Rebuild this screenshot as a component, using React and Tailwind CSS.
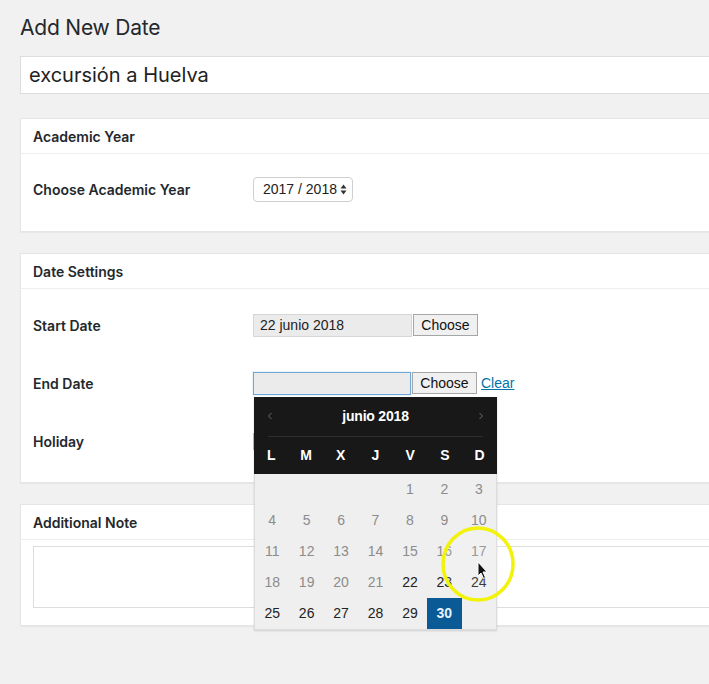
import React from 'react';

const DAY_NAMES = ['L', 'M', 'X', 'J', 'V', 'S', 'D'];

const buildWeeks = () => {
  const cells = [null, null, null, null];
  for (let d = 1; d <= 30; d++) cells.push(d);
  while (cells.length % 7) cells.push(null);
  const weeks = [];
  for (let i = 0; i < cells.length; i += 7) weeks.push(cells.slice(i, i + 7));
  return weeks;
};

const Panel = ({ title, children, className = '' }) => (
  <div className={`bg-white border border-[#e5e5e5] shadow-[0_1px_1px_rgba(0,0,0,0.04)] ${className}`}>
    <div className="h-[35px] leading-[35px] pl-[12px] border-b border-[#eeeeee] text-[14px] font-semibold text-[#23282d]">
      {title}
    </div>
    {children}
  </div>
);

const Row = ({ label, children }) => (
  <div className="flex items-center h-[58px] pl-[12px]">
    <div className="w-[220px] text-[14px] font-semibold text-[#23282d]">{label}</div>
    <div className="flex items-center">{children}</div>
  </div>
);

const ChooseButton = () => (
  <div className="ml-[1px] w-[65px] h-[22px] flex items-center justify-center bg-[#f0f0f0] border border-[#a6a6a6] text-[14px] text-[#111] font-['Liberation_Sans',sans-serif]">
    Choose
  </div>
);

const Calendar = () => {
  const weeks = buildWeeks();
  return (
    <div className="absolute left-[1px] top-[25px] w-[243px] z-10 font-['Liberation_Sans',sans-serif] shadow-[0_1px_2px_rgba(0,0,0,0.15)]">
      <div className="bg-[#181818]">
        <div className="flex items-center justify-between h-[39px] px-[13px]">
          <svg width="6" height="8" viewBox="0 0 6 8"><path d="M4.5 1 L1.5 4 L4.5 7" stroke="#6e6e6e" strokeWidth="1" fill="none" /></svg>
          <span className="text-white font-bold text-[14px] tracking-[-0.2px]">junio 2018</span>
          <svg width="6" height="8" viewBox="0 0 6 8"><path d="M1.5 1 L4.5 4 L1.5 7" stroke="#6e6e6e" strokeWidth="1" fill="none" /></svg>
        </div>
        <div className="mx-[14px] border-t border-[#2e2e2e]" />
        <div className="grid grid-cols-7 h-[37px] items-center">
          {DAY_NAMES.map(d => (
            <div key={d} className="text-center text-white font-bold text-[14px]">{d}</div>
          ))}
        </div>
      </div>
      <div className="bg-[#efefef] border border-t-0 border-[#dcdcdc]">
        {weeks.map((week, i) => (
          <div key={i} className="grid grid-cols-7 h-[31px]">
            {week.map((d, j) => {
              if (!d) return <div key={j} />;
              if (d === 30) {
                return (
                  <div key={j} className="flex items-center justify-center bg-[#0a5a96] text-[#e6f3ff] font-bold text-[14px]">
                    {d}
                  </div>
                );
              }
              return (
                <div
                  key={j}
                  className={`flex items-center justify-center text-[14px] ${d < 22 ? 'text-[#8c8c8c]' : 'text-[#222]'}`}
                >
                  {d}
                </div>
              );
            })}
          </div>
        ))}
      </div>
    </div>
  );
};

const App = () => {
  return (
    <div className="relative w-[709px] h-[684px] overflow-hidden bg-[#f1f1f1] font-['Inter',sans-serif] text-[#23282d]">
      <div className="w-[780px] pl-[20px] pt-[14px]">
        <h1 className="text-[21px] leading-[28px] font-normal text-[#23282d] tracking-[-0.2px]">Add New Date</h1>

        <div className="mt-[14px] h-[38px] bg-white border border-[#dddddd] flex items-center pl-[8px] text-[20px] text-[#222]">
          excursión a Huelva
        </div>

        <Panel title="Academic Year" className="mt-[24px]">
          <div className="pt-[6px] pb-[13px]">
            <Row label="Choose Academic Year">
              <div className="w-[100px] h-[25px] rounded-[4px] border border-[#cfcfcf] bg-white flex items-center justify-between pl-[9px] pr-[5px] text-[14px] text-[#222] font-['Liberation_Sans',sans-serif]">
                <span>2017 / 2018</span>
                <svg width="7" height="11" viewBox="0 0 7 11">
                  <path d="M3.5 0.5 L6.5 4.5 L0.5 4.5 Z" fill="#333" />
                  <path d="M3.5 10.5 L6.5 6.5 L0.5 6.5 Z" fill="#333" />
                </svg>
              </div>
            </Row>
          </div>
        </Panel>

        <Panel title="Date Settings" className="mt-[21px]">
          <div className="pt-[7px] pb-[12px]">
            <Row label="Start Date">
              <div className="w-[159px] h-[23px] bg-[#ebebeb] border border-[#d6d6d6] flex items-center pl-[6px] text-[14px] text-[#222] font-['Liberation_Sans',sans-serif]">
                22 junio 2018
              </div>
              <ChooseButton />
            </Row>
            <Row label="End Date">
              <div className="relative">
                <div className="w-[158px] h-[23px] bg-[#ebebeb] border border-[#6fa7d9] shadow-[0_0_1px_rgba(30,140,190,0.6)]" />
                <Calendar />
              </div>
              <ChooseButton />
              <span className="ml-[4px] text-[14px] text-[#0073aa] underline font-['Liberation_Sans',sans-serif]">Clear</span>
            </Row>
            <Row label="Holiday">
              <div className="w-[120px] h-[17px] border-l-2 border-[#bdbdbd]" />
            </Row>
          </div>
        </Panel>

        <Panel title="Additional Note" className="mt-[21px]">
          <div className="pt-[6px] pb-[17px] pl-[12px]">
            <div className="w-[740px] h-[62px] border border-[#dddddd] bg-white" />
          </div>
        </Panel>
      </div>

      <svg className="absolute left-[440px] top-[526px] pointer-events-none z-20" width="78" height="78" viewBox="0 0 78 78">
        <ellipse cx="38" cy="38" rx="35" ry="36" stroke="#f2f20a" strokeWidth="3.5" fill="rgba(255,255,255,0.12)" />
        <path d="M38 36 L38 50 L41 47 L43.5 52.5 L45.5 51.5 L43 46 L47 46 Z" fill="#111" stroke="#fff" strokeWidth="1" />
      </svg>
    </div>
  );
};

export default App;
